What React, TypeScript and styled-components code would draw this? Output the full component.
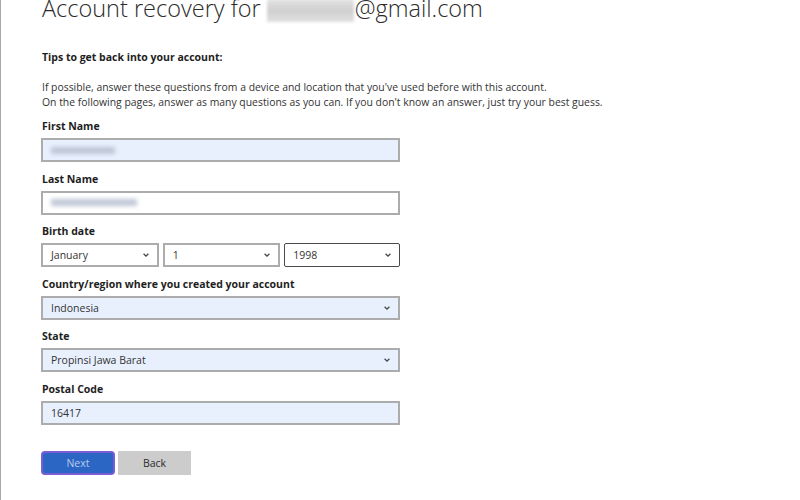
import React from "react";
import styled, { createGlobalStyle } from "styled-components";

const Global = createGlobalStyle`
  html, body { margin: 0; padding: 0; background: #fff; }
  body { font-family: "Open Sans", "Noto Sans", sans-serif; overflow: hidden; }
`;

const Page = styled.div`
  width: 800px;
  height: 500px;
  box-sizing: border-box;
  border-left: 1px solid #a9a9a9;
  padding-left: 40px;
  overflow: hidden;
`;

const Title = styled.h1`
  margin: -7px 0 0 1px;
  font-size: 23.5px;
  line-height: 30px;
  font-weight: 300;
  color: #2b2b2b;
  display: flex;
  align-items: center;
  white-space: nowrap;
`;

const BlurName = styled.span<{ $w: number }>`
  display: inline-block;
  width: ${(p) => p.$w}px;
  height: 23px;
  margin: 4px 1px 0 6px;
  background: linear-gradient(180deg, #e4e4e4 0%, #cfcfcf 50%, #e0e0e0 100%);
  filter: blur(1.5px);
`;

const Tips = styled.p`
  margin: 26px 0 0 1px;
  font-size: 10.5px;
  line-height: 16px;
  font-weight: 700;
  color: #1e1e1e;
`;

const Para = styled.p`
  margin: 15px 0 0 1px;
  font-size: 10.4px;
  line-height: 15px;
  color: #333;
`;

const Form = styled.div`
  margin-top: 8px;
  width: 359px;
  display: flex;
  flex-direction: column;
  gap: 8.5px;
`;

const Field = styled.div`
  display: flex;
  flex-direction: column;
  gap: 4px;
`;

const Label = styled.div`
  margin-left: 1px;
  font-size: 10.5px;
  line-height: 16px;
  font-weight: 700;
  color: #1e1e1e;
`;

const Box = styled.div<{ $fill?: boolean; $focus?: boolean }>`
  box-sizing: border-box;
  height: 24px;
  flex: none;
  border: ${(p) => (p.$focus ? "1.5px solid #4a4a4a" : "2px solid #acacac")};
  border-radius: ${(p) => (p.$focus ? "2px" : "0")};
  background: ${(p) => (p.$fill ? "#e8f0fe" : "#fff")};
  display: flex;
  align-items: center;
  padding: 0 7px 0 8px;
  font-size: 10.5px;
  color: #333;
  min-width: 0;
`;

const Value = styled.span`
  flex: 1;
`;

const Smudge = styled.span<{ $w: number }>`
  display: block;
  width: ${(p) => p.$w}px;
  height: 7px;
  background: #b9c2d2;
  filter: blur(2px);
  opacity: 0.9;
`;

const Row = styled.div`
  display: flex;
  gap: 4px;
  & > * {
    flex: 1 1 0;
  }
`;

const Buttons = styled.div`
  margin-top: 26px;
  display: flex;
  gap: 3px;
`;

const Button = styled.button<{ $primary?: boolean }>`
  box-sizing: border-box;
  width: ${(p) => (p.$primary ? "74px" : "73px")};
  height: 24px;
  font-family: inherit;
  font-size: 10.5px;
  cursor: pointer;
  border: ${(p) => (p.$primary ? "2px solid #7a5cd4" : "none")};
  border-radius: ${(p) => (p.$primary ? "4px" : "0")};
  background: ${(p) => (p.$primary ? "#2b66c4" : "#cccccc")};
  color: ${(p) => (p.$primary ? "#bccbec" : "#2b2b2b")};
  padding: 0;
`;

const Chevron = () => (
  <svg width="8" height="6" viewBox="0 0 8 6">
    <path d="M1.6 1.8 L4 4.1 L6.4 1.8" fill="none" stroke="#444" strokeWidth="1.3" />
  </svg>
);

const Select = ({ value, fill, focus }: { value: string; fill?: boolean; focus?: boolean }) => (
  <Box $fill={fill} $focus={focus}>
    <Value>{value}</Value>
    <Chevron />
  </Box>
);

export default function App() {
  return (
    <Page>
      <Global />
      <Title>
        Account recovery for
        <BlurName $w={87} />
        @gmail.com
      </Title>
      <Tips>Tips to get back into your account:</Tips>
      <Para>
        If possible, answer these questions from a device and location that you've used before with this account.
        <br />
        On the following pages, answer as many questions as you can. If you don't know an answer, just try your best guess.
      </Para>
      <Form>
        <Field>
          <Label>First Name</Label>
          <Box $fill>
            <Smudge $w={64} />
          </Box>
        </Field>
        <Field>
          <Label>Last Name</Label>
          <Box>
            <Smudge $w={86} />
          </Box>
        </Field>
        <Field>
          <Label>Birth date</Label>
          <Row>
            <Select value="January" />
            <Select value="1" />
            <Select value="1998" focus />
          </Row>
        </Field>
        <Field>
          <Label>Country/region where you created your account</Label>
          <Select value="Indonesia" fill />
        </Field>
        <Field>
          <Label>State</Label>
          <Select value="Propinsi Jawa Barat" fill />
        </Field>
        <Field>
          <Label>Postal Code</Label>
          <Box $fill>16417</Box>
        </Field>
      </Form>
      <Buttons>
        <Button $primary>Next</Button>
        <Button>Back</Button>
      </Buttons>
    </Page>
  );
}
